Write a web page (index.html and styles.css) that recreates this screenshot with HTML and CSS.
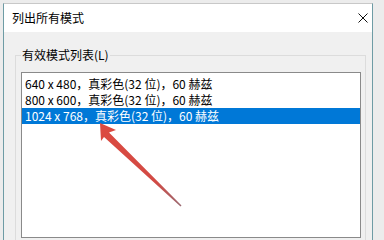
FILE: index.html
```html
<!DOCTYPE html>
<html lang="zh-CN">
<head>
    <meta charset="UTF-8">
    <title>列出所有模式</title>
    <link rel="stylesheet" href="styles.css">
</head>
<body>
    <div class="window">
        <div class="titlebar">
            <span class="title">列出所有模式</span>
            <svg class="close" width="10" height="10" viewBox="0 0 10 10">
                <path d="M0.5 0.5 L9.5 9.5 M9.5 0.5 L0.5 9.5" stroke="#111" stroke-width="1" fill="none"/>
            </svg>
        </div>
        <div class="content">
            <fieldset class="group">
                <legend>有效模式列表(L)</legend>
                <div class="listbox">
                    <div class="item">640 x 480，真彩色(32 位)，60 赫兹</div>
                    <div class="item">800 x 600，真彩色(32 位)，60 赫兹</div>
                    <div class="item selected">1024 x 768，真彩色(32 位)，60 赫兹</div>
                </div>
            </fieldset>
        </div>
    </div>

    <!-- red annotation arrow over the dialog -->
    <svg class="arrow" width="384" height="240" viewBox="0 0 384 240">
        <defs>
            <linearGradient id="arrowFill" x1="100" y1="123" x2="181" y2="206" gradientUnits="userSpaceOnUse">
                <stop offset="0" stop-color="#dc4a40"/>
                <stop offset="0.7" stop-color="#d24a44"/>
                <stop offset="1" stop-color="#9a6a72"/>
            </linearGradient>
        </defs>
        <polygon points="100,123 116,130 109,132.5 181.5,205.5 180.5,206.5 104,137 101,141" fill="url(#arrowFill)"/>
    </svg>
</body>
</html>
```

FILE: styles.css
```css
body {
    margin: 0;
    height: 240px;
    overflow: hidden;
    background: #ececec;
    font-family: "Noto Sans CJK SC", "Noto Sans", sans-serif;
    font-size: 12px;
    color: #000;
}
.window {
    margin: 3px 0 0 3px;
    width: 368px;
    height: 236px;
    border: 1px solid #6e9ca5;
    border-top-color: #c8c8c8;
    border-bottom: none;
    background: #f0f0f0;
}
.titlebar {
    height: 28px;
    background: #fff;
    display: flex;
    align-items: center;
    justify-content: space-between;
    padding: 0 4px 0 8px;
}
.title {
    line-height: 16px;
}
.close {
    display: block;
}
.content {
    padding: 15px 6px 0 11px;
}
.group {
    margin: 0;
    padding: 0 4px 2px 5px;
    border: 1px solid #dcdcdc;
    border-bottom: none;
    min-width: 0;
}
.group legend {
    padding: 0 1px;
    line-height: 16px;
}
.listbox {
    margin-top: 9px;
    height: 161px;
    border: 1px solid #8a8a8a;
    background: #fff;
    padding-top: 3px;
}
.item {
    height: 16px;
    line-height: 16px;
    padding-left: 3px;
    white-space: nowrap;
}
.item.selected {
    background: #0078d7;
    color: #fff;
}
.arrow {
    position: absolute;
    left: 0;
    top: 0;
    pointer-events: none;
}
```
